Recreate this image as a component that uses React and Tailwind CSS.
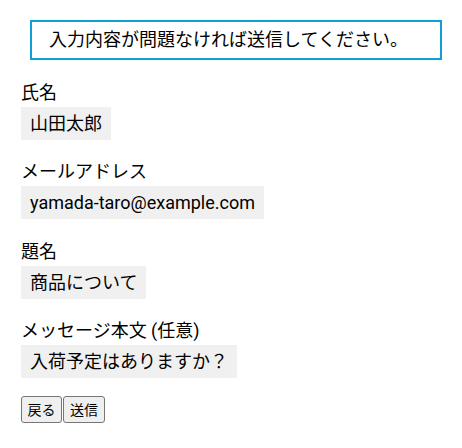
export default function App() {
  const fields = [
    { label: '氏名', value: '山田太郎' },
    { label: 'メールアドレス', value: 'yamada-taro@example.com' },
    { label: '題名', value: '商品について' },
    { label: 'メッセージ本文 (任意)', value: '入荷予定はありますか？' },
  ];

  return (
    <div
      className="w-[462px] h-[448px] bg-white text-black text-[18px] pt-[20px]"
      style={{ fontFamily: 'Roboto, "Noto Sans CJK JP", sans-serif' }}
    >
      <div className="ml-[30px] mr-[20px] h-[40px] border-2 border-[#0ea0d2] flex items-center pl-[17px] leading-none">
        入力内容が問題なければ送信してください。
      </div>

      <div className="pl-[21px] pt-[19px]">
        {fields.map((f) => (
          <div key={f.label} className="mb-[18.33px]">
            <div className="leading-[28px] whitespace-nowrap">{f.label}</div>
            <div className="inline-block bg-[#f0f0f0] px-[9px] leading-[33px] h-[33px] whitespace-nowrap align-top">
              {f.value}
            </div>
          </div>
        ))}

        <div className="flex gap-[1px] mt-[6px] h-[27px]">
          <button className="w-[41px] h-[27px] border border-[#767676] rounded-[3px] bg-[#efefef] text-[14px] leading-none flex items-center justify-center">
            戻る
          </button>
          <button className="w-[42px] h-[27px] border border-[#767676] rounded-[3px] bg-[#efefef] text-[14px] leading-none flex items-center justify-center">
            送信
          </button>
        </div>
      </div>
    </div>
  );
}
